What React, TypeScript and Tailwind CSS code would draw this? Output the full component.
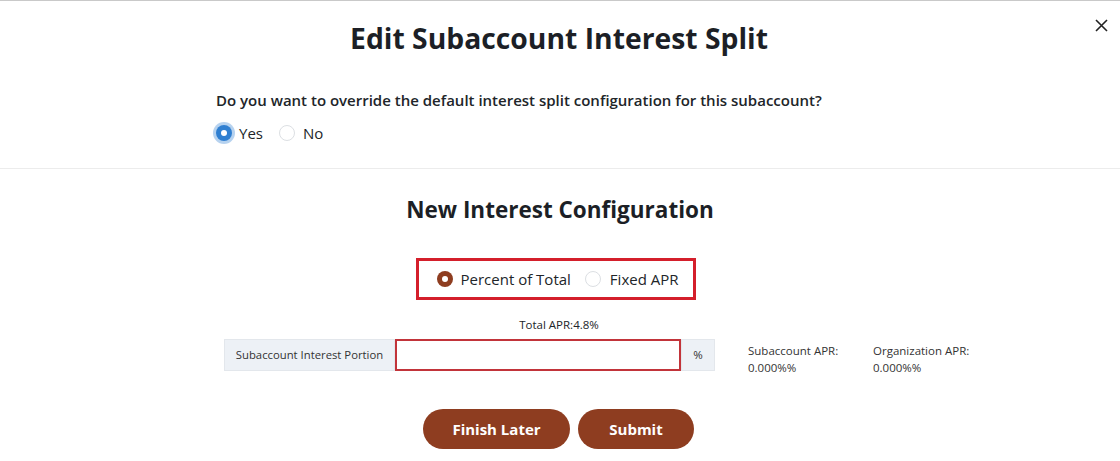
import React from "react";

const font = { fontFamily: '"Open Sans", "Noto Sans", sans-serif' };

function Radio({ checked, variant }: { checked: boolean; variant: "blue" | "brown" }) {
  if (!checked) {
    return <span className="inline-block w-[16px] h-[16px] rounded-full border border-[#dcdfe3] bg-white shrink-0" />;
  }
  if (variant === "blue") {
    return (
      <span className="inline-flex w-[16px] h-[16px] rounded-full bg-[#2f7fd1] items-center justify-center shrink-0 shadow-[0_0_0_3px_rgba(47,127,209,0.35)]">
        <span className="w-[6px] h-[6px] rounded-full bg-white" />
      </span>
    );
  }
  return (
    <span className="inline-flex w-[16px] h-[16px] rounded-full bg-[#8e3d20] items-center justify-center shrink-0">
      <span className="w-[6px] h-[6px] rounded-full bg-white" />
    </span>
  );
}

export default function App() {
  return (
    <div className="w-[1120px] h-[461px] bg-white relative overflow-hidden text-[#212529]" style={font}>
      <div className="h-[1px] bg-[#c9c9c9]" />
      <button className="absolute right-[11px] top-[17px] w-[16px] h-[16px] flex items-center justify-center text-[#222]">
        <svg width="13" height="13" viewBox="0 0 13 13" fill="none" stroke="currentColor" strokeWidth="1.6">
          <path d="M1 1L12 12M12 1L1 12" />
        </svg>
      </button>
      <div className="pt-[17px] text-center">
        <h1 className="text-[28.3px] font-bold leading-[40px] text-[#1c1f26] mr-[2px]">Edit Subaccount Interest Split</h1>
      </div>
      <div className="pl-[216px] pt-[31px]">
        <p className="text-[15px] font-semibold leading-[22px]">
          Do you want to override the default interest split configuration for this subaccount?
        </p>
        <div className="flex items-center mt-[10px] h-[24px]">
          <label className="flex items-center gap-[7px]">
            <Radio checked variant="blue" />
            <span className="text-[15px]">Yes</span>
          </label>
          <label className="flex items-center gap-[8px] ml-[16px]">
            <Radio checked={false} variant="blue" />
            <span className="text-[15px]">No</span>
          </label>
        </div>
      </div>
      <div className="mt-[23px] h-[1px] bg-[#ececec]" />
      <div className="text-center pt-[25px]">
        <h2 className="text-[22.5px] font-bold leading-[32px] text-[#1c1f26]">New Interest Configuration</h2>
      </div>
      <div className="flex justify-center mt-[32px]">
        <div className="w-[280px] h-[42px] border-[3px] border-[#d41f2b] flex items-center pl-[18px] mr-[9px]">
          <label className="flex items-center gap-[8px]">
            <Radio checked variant="brown" />
            <span className="text-[15px]">Percent of Total</span>
          </label>
          <label className="flex items-center gap-[9px] ml-[14px]">
            <Radio checked={false} variant="brown" />
            <span className="text-[15px]">Fixed APR</span>
          </label>
        </div>
      </div>
      <div className="text-center text-[11.5px] mt-[17px] leading-[16px] mr-[2px]">Total APR:4.8%</div>
      <div className="flex mt-[6px] pl-[224px] items-start">
        <div className="flex h-[32px]">
          <div className="w-[171px] bg-[#edf1f6] border border-[#e3e7ec] flex items-center justify-center text-[11.3px] text-[#333]">
            Subaccount Interest Portion
          </div>
          <div className="w-[286px] border-2 border-[#c2343a] bg-white" />
          <div className="w-[34px] bg-[#edf1f6] border border-[#e3e7ec] flex items-center justify-center text-[11.5px] text-[#333]">
            %
          </div>
        </div>
        <div className="ml-[33px] text-[11.5px] leading-[17px] text-[#333] w-[125px] pt-[3px]">
          <div>Subaccount APR:</div>
          <div>0.000%%</div>
        </div>
        <div className="text-[11.5px] leading-[17px] text-[#333] pt-[3px]">
          <div>Organization APR:</div>
          <div>0.000%%</div>
        </div>
      </div>
      <div className="flex justify-center gap-[8px] mt-[33px] mr-[3px]">
        <button className="w-[147px] h-[40px] rounded-full bg-[#8e3d20] text-white font-bold text-[15px]">Finish Later</button>
        <button className="w-[116px] h-[40px] rounded-full bg-[#8e3d20] text-white font-bold text-[15px]">Submit</button>
      </div>
    </div>
  );
}
